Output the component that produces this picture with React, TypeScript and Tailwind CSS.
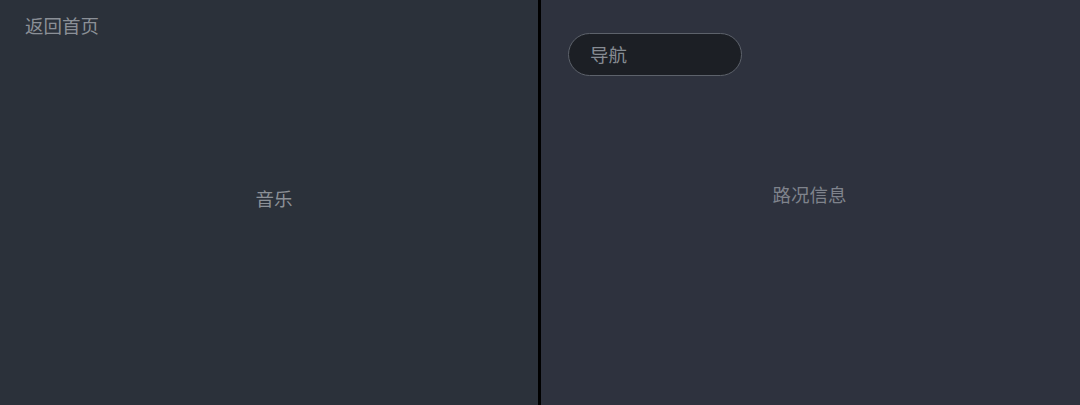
export default function App() {
  const font = { fontFamily: '"Noto Sans CJK SC", "Noto Sans", sans-serif' };
  return (
    <div className="flex h-[405px] w-[1080px] overflow-hidden" style={font}>
      <div className="relative flex h-full w-[538px] items-center justify-center bg-[#2b313a]">
        <div className="absolute left-[25px] top-[12px] text-[18.5px] leading-[26px] text-[#8b9097]">返回首页</div>
        <div className="ml-[10px] mt-[-10px] text-[18.5px] leading-[26px] text-[#8b9097]">音乐</div>
      </div>
      <div className="h-full w-[3px] bg-black" />
      <div className="relative flex h-full flex-1 items-center justify-center bg-[#2e323e]">
        <div className="absolute left-[27px] top-[33px] flex h-[43px] w-[174px] items-center rounded-full border border-[#5d626b] bg-[#1c1f25] pl-[21px] text-[18.5px] text-[#878c93]">
          导航
        </div>
        <div className="mr-[2px] mt-[-18px] text-[18.5px] leading-[26px] text-[#7f838c]">路况信息</div>
      </div>
    </div>
  );
}
